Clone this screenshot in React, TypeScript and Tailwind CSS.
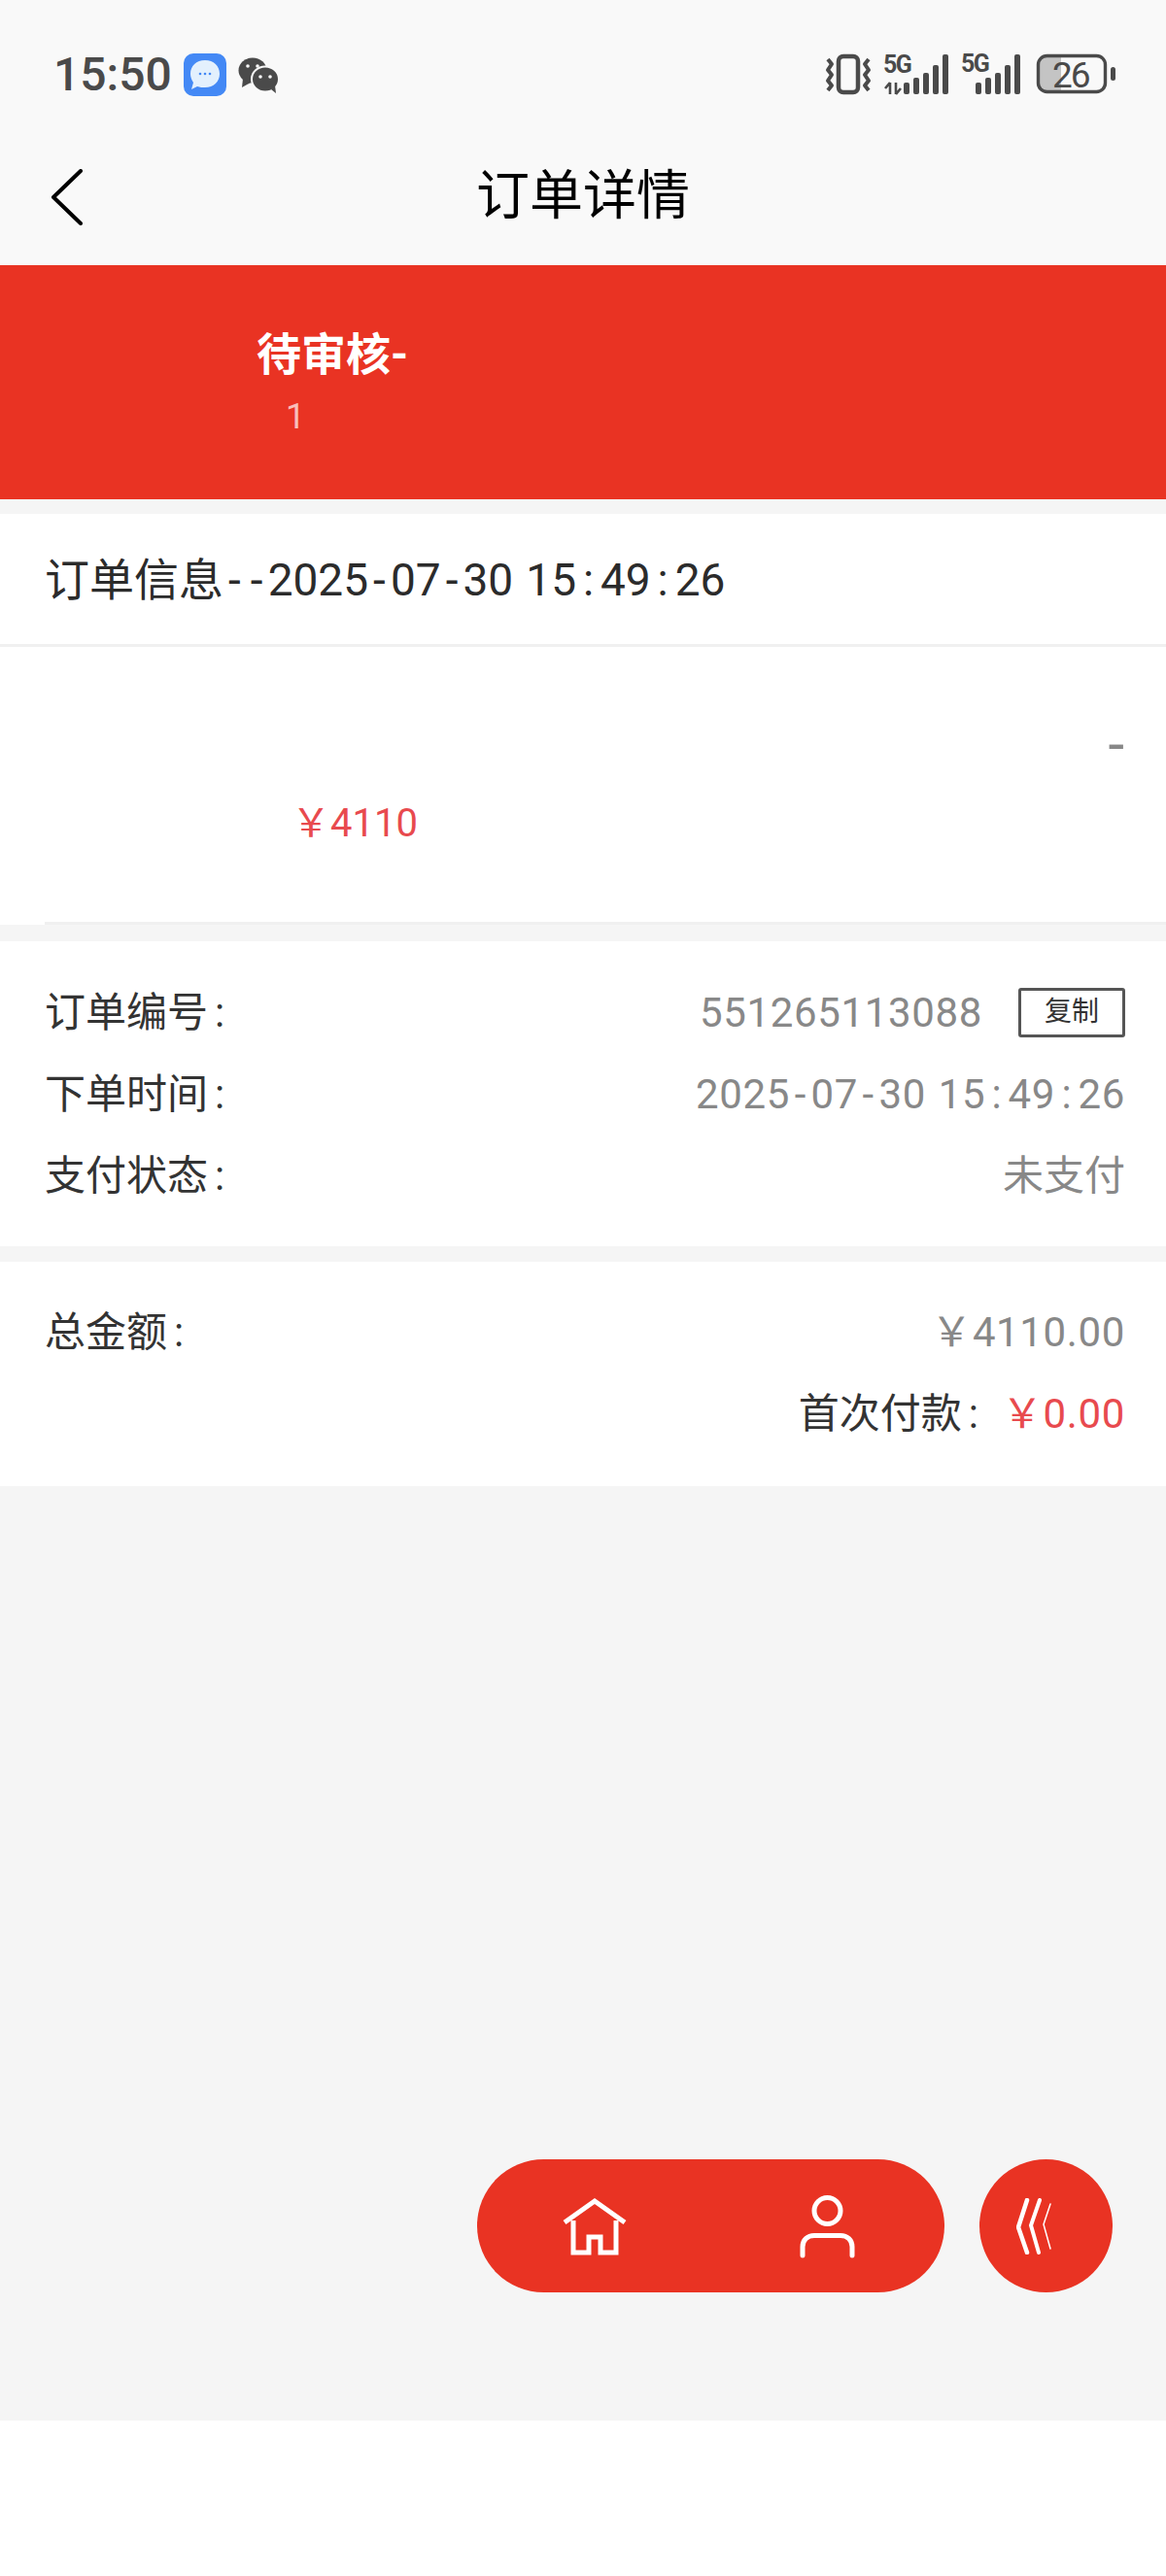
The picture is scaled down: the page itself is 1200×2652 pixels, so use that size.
import { clsx } from "clsx";

const cjk = "font-['Roboto','Noto_Sans_CJK_SC',sans-serif]";

// the reference font is nearly monospaced: pad Roboto's narrow separators to match
const Stamp = ({ text, className }: { text: string; className?: string }) => (
  <span className={clsx("whitespace-pre", className)}>
    {text.split("").map((ch, i) => (
      <span
        key={i}
        className={clsx(
          ch === "-" && "px-[0.11em]",
          ch === ":" && "px-[0.15em]",
          ch === " " && "px-[0.02em]",
        )}
      >
        {ch}
      </span>
    ))}
  </span>
);

const WeChatIcon = () => (
  <svg width="43" height="37" viewBox="0 0 43 37" fill="#4a4a4a">
    <ellipse cx="15" cy="13.5" rx="14.5" ry="13" />
    <path d="M5 22 L4 31 L13 26 Z" />
    <ellipse cx="28" cy="22.5" rx="14" ry="13" stroke="#f9f9f9" strokeWidth="2" />
    <path d="M34 33 L39 37 L38 29 Z" />
    <circle cx="10" cy="9" r="1.8" fill="#f9f9f9" />
    <circle cx="20" cy="9" r="1.8" fill="#f9f9f9" />
    <circle cx="23" cy="20" r="1.8" fill="#f9f9f9" />
    <circle cx="33" cy="20" r="1.8" fill="#f9f9f9" />
  </svg>
);

const MessageIcon = () => (
  <div className="flex h-[44px] w-[44px] items-center justify-center rounded-[10px] bg-[#4489f5]">
    <svg width="36" height="36" viewBox="0 0 36 36">
      <path d="M18 3 C27 3 33 9 33 17 C33 25 27 31 18 31 C15 31 13 31 10 30 L4 33 L6 26 C4 23 3 20 3 17 C3 9 9 3 18 3 Z" fill="#e3f0fd" />
      <circle cx="13" cy="17" r="1.3" fill="#4489f5" />
      <circle cx="18" cy="17" r="1.3" fill="#4489f5" />
      <circle cx="23" cy="17" r="1.3" fill="#4489f5" />
    </svg>
  </div>
);

const StatusIcons = () => (
  <svg width="300" height="54" viewBox="0 -12 300 54" fill="#4a4a4a">
    {/* vibrate */}
    <rect x="14" y="2" width="20" height="37" rx="5" fill="none" stroke="#4a4a4a" strokeWidth="4.5" />
    <path d="M3 5 L7 10 L3 16 L7 21 L3 27 L7 32 L3 37" fill="none" stroke="#4a4a4a" strokeWidth="4" strokeLinejoin="round" />
    <path d="M45 5 L41 10 L45 16 L41 21 L45 27 L41 32 L45 37" fill="none" stroke="#4a4a4a" strokeWidth="4" strokeLinejoin="round" />
    {/* sim 1 */}
    <text x="60" y="19" fontSize="25" fontWeight="700" fontFamily="Roboto, sans-serif" letterSpacing="-1.6">5G</text>
    <path d="M67 29 V41 M67 29 L62 35 M73 29 V41 M73 41 L78 35" fill="none" stroke="#4a4a4a" strokeWidth="2.6" />
    <rect x="81" y="29" width="6" height="12" rx="2" />
    <rect x="91" y="24" width="6" height="17" rx="2" />
    <rect x="101" y="19" width="6" height="22" rx="2" />
    <rect x="111" y="11" width="6" height="30" rx="2" />
    <rect x="121" y="0" width="6" height="41" rx="2" />
    {/* sim 2 */}
    <text x="140" y="18" fontSize="25" fontWeight="700" fontFamily="Roboto, sans-serif" letterSpacing="-1.6">5G</text>
    <rect x="155" y="29" width="6" height="12" rx="2" />
    <rect x="165" y="24" width="6" height="17" rx="2" />
    <rect x="175" y="19" width="6" height="22" rx="2" />
    <rect x="185" y="11" width="6" height="30" rx="2" />
    <rect x="195" y="0" width="6" height="41" rx="2" />
    {/* battery */}
    <path d="M228 2 H243 V38 H228 C222 38 220 34 220 30 V10 C220 6 222 2 228 2 Z" fill="#c4c4c4" />
    <rect x="219.5" y="1.5" width="69" height="37" rx="9" fill="none" stroke="#4a4a4a" strokeWidth="3.4" />
    <text x="234" y="34" fontSize="37" fontFamily="Roboto, sans-serif" letterSpacing="-2">26</text>
    <rect x="294" y="13" width="5" height="14" rx="2.5" />
  </svg>
);

const StatusBar = () => (
  <div className="flex h-[136px] items-start justify-between pl-[55px] pr-[51px] pt-[44px]">
    <div className="mt-[11px] flex items-center">
      <span className="text-[48px] leading-[44px] font-medium text-[#4a4a4a] font-['Roboto',sans-serif]">15:50</span>
      <div className="ml-[12px]"><MessageIcon /></div>
      <div className="ml-[12px]"><WeChatIcon /></div>
    </div>
    <StatusIcons />
  </div>
);

const NavBar = () => (
  <div className="relative flex h-[137px] items-center justify-center pb-[6px]">
    <svg className="absolute left-[52px] top-[38px]" width="34" height="58" viewBox="0 0 34 58" fill="none">
      <path d="M31 2 L3 29 L31 56" stroke="#000" strokeWidth="4" strokeLinecap="round" strokeLinejoin="round" />
    </svg>
    <span className={`text-[55px] leading-none text-black ${cjk}`}>订单详情</span>
  </div>
);

const Label = ({ text }: { text: string }) => (
  <span className="text-[42px] text-[#333]">
    {text}
    <span className="ml-[7px]">:</span>
  </span>
);

const InfoRow = ({ label, children }: { label: string; children: React.ReactNode }) => (
  <div className="flex h-[84px] items-center justify-between">
    <Label text={label} />
    <div className="flex items-center text-[42px] text-[#888]">{children}</div>
  </div>
);

export default function App() {
  return (
    <div className={`flex h-[2652px] w-[1200px] flex-col overflow-hidden bg-white ${cjk}`}>
      <div className="bg-[#f9f9f9]">
        <StatusBar />
        <NavBar />
      </div>

      <div className="flex h-[241px] flex-col bg-[#e93323] pl-[264px] pt-[64px] text-white">
        <span className="text-[46px] leading-[56px] font-bold">待审核-</span>
        <span className="mt-[14px] pl-[30px] text-[36px] leading-[44px] text-white/70">1</span>
      </div>

      <div className="flex flex-1 flex-col bg-[#f5f5f5]">
        <div className="mt-[15px] flex h-[137px] items-center border-b-[3px] border-[#f0f0f0] bg-white pl-[46px] pt-[2px]">
          <span className="text-[46px] text-[#2b2b2b]">
            订单信息
            <Stamp text="--2025-07-30 15:49:26" />
          </span>
        </div>

        <div className="relative h-[286px] bg-white">
          <span className="absolute right-[43px] top-[71px] text-[60px] leading-none text-[#888]">-</span>
          <span className="absolute left-[300px] top-[162px] text-[40px] leading-none text-[#e84a4e]">￥4110</span>
          <div className="absolute bottom-0 left-[46px] right-0 h-[3px] bg-[#f0f0f0]" />
        </div>

        <div className="mt-[17px] h-[314px] bg-white pl-[46px] pr-[42px] pt-[31px]">
          <InfoRow label="订单编号">
            <Stamp text="551265113088" className="tracking-[0.015em]" />
            <span className="ml-[37px] flex h-[51px] w-[110px] items-center justify-center rounded-[3px] border-[3px] border-[#555] text-[28px] text-[#333]">复制</span>
          </InfoRow>
          <InfoRow label="下单时间">
            <Stamp text="2025-07-30 15:49:26" className="tracking-[0.015em]" />
          </InfoRow>
          <InfoRow label="支付状态">未支付</InfoRow>
        </div>

        <div className="mt-[16px] h-[231px] bg-white pl-[46px] pr-[42px] pt-[30px]">
          <InfoRow label="总金额">
            <span className="tracking-[0.015em]">￥4110.00</span>
          </InfoRow>
          <div className="flex h-[84px] items-center justify-end text-[42px]">
            <Label text="首次付款" />
            <span className="ml-[24px] tracking-[0.015em] text-[#e84a4e]">￥0.00</span>
          </div>
        </div>

        <div className="flex flex-1 items-start justify-end gap-[36px] pr-[55px] pt-[693px]">
          <div className="flex h-[137px] w-[481px] items-center justify-between rounded-full bg-[#e93323] pl-[88px] pr-[91px]">
            <svg width="66" height="60" viewBox="0 0 66 60" fill="none" stroke="#fff" strokeWidth="5">
              <path d="M2 26 L33 4 L64 26" />
              <path d="M11 24 V57 H27 V41 H39 V57 H55 V24" />
            </svg>
            <svg width="58" height="66" viewBox="0 0 58 66" fill="none" stroke="#fff" strokeWidth="5" strokeLinecap="round">
              <circle cx="28.5" cy="17" r="13.5" />
              <path d="M3 63 V54 C3 47 8 42.5 15 42.5 H42 C49 42.5 54 47 54 54 V63" />
            </svg>
          </div>
          <div className="flex h-[137px] w-[137px] items-center rounded-full bg-[#e93323] pl-[38px]">
            <svg width="38" height="58" viewBox="0 0 38 58" fill="none" stroke="#fff" strokeLinecap="round">
              <path d="M11 2 L2 30 L11 56" strokeWidth="4.5" />
              <path d="M24 2 L15 28 L23 56" strokeWidth="4" />
              <path d="M35 6 L28 27 L35 52" strokeWidth="1.5" />
            </svg>
          </div>
        </div>
      </div>

      <div className="h-[160px] bg-white" />
    </div>
  );
}
